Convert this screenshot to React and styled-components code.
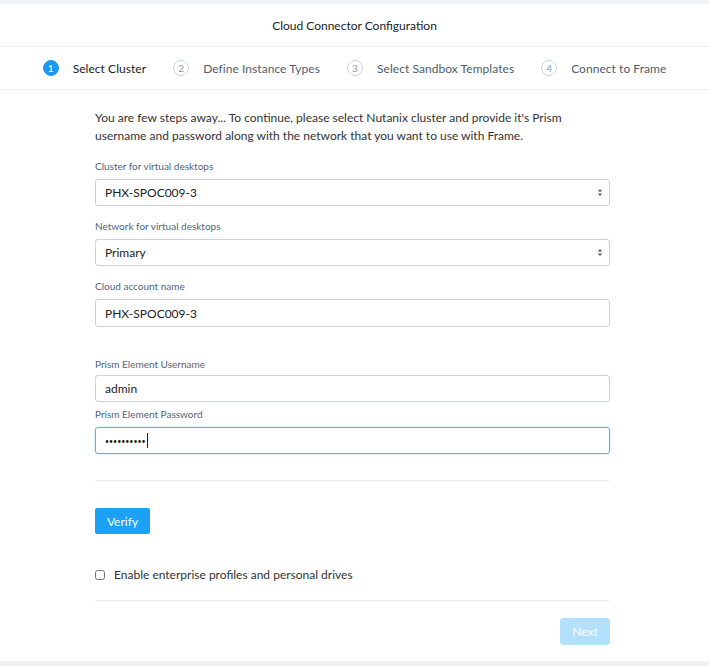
import React, { useState } from 'react';
import styled, { createGlobalStyle } from 'styled-components';

const GlobalStyle = createGlobalStyle`
    html, body {
        margin: 0;
        padding: 0;
        background: #f0f1f3;
        font-family: Lato, "Open Sans", sans-serif;
    }
`;

const steps = ['Select Cluster', 'Define Instance Types', 'Select Sandbox Templates', 'Connect to Frame'];

function App() {
    const [enterprise, setEnterprise] = useState(false);

    return (
        <Page>
            <GlobalStyle />
            <Modal>
                <Header>Cloud Connector Configuration</Header>

                <Stepper>
                    {steps.map((s, i) => (
                        <Step key={s}>
                            <StepNum active={i === 0}>{i + 1}</StepNum>
                            <StepLabel active={i === 0}>{s}</StepLabel>
                        </Step>
                    ))}
                </Stepper>

                <Body>
                    <Intro>
                        You are few steps away... To continue, please select Nutanix cluster and provide it's Prism
                        username and password along with the network that you want to use with Frame.
                    </Intro>

                    <Field>
                        <Label>Cluster for virtual desktops</Label>
                        <SelectBox>
                            <span>PHX-SPOC009-3</span>
                            <Caret />
                        </SelectBox>
                    </Field>

                    <Field>
                        <Label>Network for virtual desktops</Label>
                        <SelectBox>
                            <span>Primary</span>
                            <Caret />
                        </SelectBox>
                    </Field>

                    <Field>
                        <Label>Cloud account name</Label>
                        <Input tall defaultValue="PHX-SPOC009-3" />
                    </Field>

                    <Field spaced tight>
                        <Label close>Prism Element Username</Label>
                        <Input defaultValue="admin" />
                    </Field>

                    <Field last>
                        <Label>Prism Element Password</Label>
                        <Input focused as="div">
                            <Dots>••••••••••</Dots>
                            <Cursor />
                        </Input>
                    </Field>

                    <Divider gap={26} />

                    <VerifyBtn>Verify</VerifyBtn>

                    <CheckRow>
                        <Check type="checkbox" checked={enterprise} onChange={e => setEnterprise(e.target.checked)} />
                        <span>Enable enterprise profiles and personal drives</span>
                    </CheckRow>

                    <Divider gap={17} />

                    <Footer>
                        <NextBtn disabled>Next</NextBtn>
                    </Footer>
                </Body>
            </Modal>
        </Page>
    );
}

function Caret() {
    return (
        <svg width="6" height="9" viewBox="0 0 6 9">
            <path d="M0.8 3.6 L3 1 L5.2 3.6 Z" fill="#555" />
            <path d="M0.8 5.4 L3 8 L5.2 5.4 Z" fill="#555" />
        </svg>
    );
}

export default App;

const Page = styled.div`
    padding: 4px 0 5px;
    min-height: 666px;
    box-sizing: border-box;
`;

const Modal = styled.div`
    background: #fff;
    height: 657px;
    display: flex;
    flex-direction: column;
`;

const Header = styled.div`
    height: 42px;
    display: flex;
    align-items: center;
    justify-content: center;
    font-size: 12px;
    color: #222;
    border-bottom: 1px solid #eceef0;
`;

const Stepper = styled.div`
    height: 42px;
    display: flex;
    align-items: center;
    justify-content: center;
    gap: 27px;
    border-bottom: 1px solid #eceef0;
`;

const Step = styled.div`
    display: flex;
    align-items: center;
    gap: 14px;
`;

const StepNum = styled.div`
    width: 16px;
    height: 16px;
    border-radius: 50%;
    box-sizing: border-box;
    display: flex;
    align-items: center;
    justify-content: center;
    font-size: 10px;
    color: ${p => (p.active ? '#fff' : '#8a96a3')};
    background: ${p => (p.active ? '#1b98f0' : '#fff')};
    border: 1px solid ${p => (p.active ? '#1b98f0' : '#cfd5db')};
`;

const StepLabel = styled.span`
    font-size: 12px;
    letter-spacing: 0.05px;
    color: ${p => (p.active ? '#222' : '#4f5d6c')};
`;

const Body = styled.div`
    width: 515px;
    margin: 0 auto;
    padding: 19px 4px 0 0;
    display: flex;
    flex-direction: column;
`;

const Intro = styled.p`
    margin: 0 0 14px;
    font-size: 12px;
    line-height: 18px;
    color: #333;
`;

const Field = styled.div`
    display: flex;
    flex-direction: column;
    margin-top: ${p => (p.spaced ? '17px' : '0')};
    margin-bottom: ${p => (p.last ? '0' : p.tight ? '5px' : '13px')};
`;

const Label = styled.label`
    font-size: 10px;
    color: #52647a;
    line-height: 14px;
    margin-bottom: ${p => (p.close ? '4px' : '6px')};
`;

const SelectBox = styled.div`
    height: 27px;
    box-sizing: border-box;
    border: 1px solid #c9d0d6;
    border-radius: 3px;
    display: flex;
    align-items: center;
    justify-content: space-between;
    padding: 0 6px 0 9px;
    font-size: 12px;
    color: #222;
`;

const Input = styled.input`
    height: ${p => (p.tall ? '28px' : '27px')};
    box-sizing: border-box;
    border: 1px solid ${p => (p.focused ? '#5fb0f2' : '#c9d0d6')};
    box-shadow: ${p => (p.focused ? '0 0 2px rgba(27, 161, 245, 0.45)' : 'none')};
    border-radius: 3px;
    padding: 0 9px;
    font-family: inherit;
    font-size: 12px;
    color: #222;
    display: flex;
    align-items: center;
    outline: none;
`;

const Dots = styled.span`
    font-size: 7px;
    color: #222;
`;

const Cursor = styled.span`
    width: 1px;
    height: 15px;
    background: #222;
    margin-left: 1px;
`;

const Divider = styled.div`
    height: 1px;
    background: #eceef0;
    margin-top: ${p => p.gap}px;
`;

const VerifyBtn = styled.button`
    align-self: flex-start;
    margin-top: 27px;
    width: 55px;
    height: 26px;
    border: none;
    border-radius: 2px;
    background: #1ba1f5;
    color: #fff;
    font-family: inherit;
    font-size: 12px;
`;

const CheckRow = styled.label`
    display: flex;
    align-items: center;
    gap: 9px;
    margin-top: 33px;
    font-size: 12px;
    line-height: 16px;
    color: #333;
`;

const Check = styled.input`
    margin: 0;
    width: 10px;
    height: 10px;
`;

const Footer = styled.div`
    display: flex;
    justify-content: flex-end;
    padding-top: 17px;
`;

const NextBtn = styled.button`
    width: 50px;
    height: 27px;
    border: none;
    border-radius: 3px;
    background: #b3e0fb;
    color: #fff;
    font-family: inherit;
    font-size: 12px;
`;
